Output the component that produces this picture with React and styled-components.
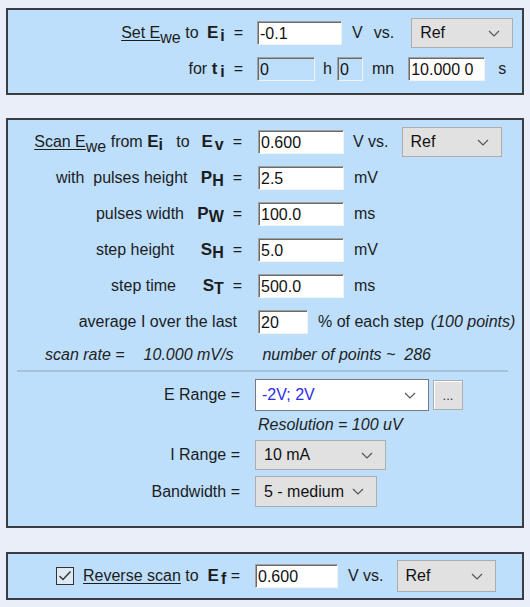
import React from "react";
import styled, { createGlobalStyle } from "styled-components";

const Global = createGlobalStyle`
  html, body { margin: 0; padding: 0; background: #e9eef9; }
  body {
    font-family: "Liberation Sans", Arial, sans-serif;
    font-size: 16px;
    color: #1c1c1c;
  }
`;

const Page = styled.div`
  width: 530px;
  height: 607px;
  box-sizing: border-box;
  padding: 8px 6px 0 6px;
  display: flex;
  flex-direction: column;
`;

const Panel = styled.section`
  box-sizing: border-box;
  height: ${(p) => p.$h}px;
  margin-top: ${(p) => p.$mt || 0}px;
  border: 2px solid #3a3d42;
  background: #bddffc;
  padding-top: ${(p) => p.$pt || 0}px;
  display: flex;
  flex-direction: column;
  gap: ${(p) => p.$gap || 0}px;
`;

const Row = styled.div`
  display: flex;
  align-items: center;
  height: ${(p) => p.$h || 30}px;
  margin-top: ${(p) => p.$mt || 0}px;
  flex: none;
`;

const Label = styled.div`
  flex: none;
  width: ${(p) => p.$w}px;
  margin-right: ${(p) => p.$gap}px;
  text-align: right;
  white-space: pre;
  display: flex;
  justify-content: flex-end;
  align-items: center;
`;

const Sym = styled.span`
  font-weight: bold;
  font-size: 17px;
  margin-left: ${(p) => p.$ml || 0}px;
`;

const Sub = styled.span`
  position: relative;
  top: ${(p) => p.$drop || 5}px;
  font-size: ${(p) => p.$size || 16}px;
  font-weight: ${(p) => (p.$bold ? "bold" : "normal")};
  margin-left: ${(p) => p.$ml || 0}px;
`;

const Under = styled.span`
  text-decoration: underline;
  text-underline-offset: 2px;
`;

const Field = styled.input`
  box-sizing: border-box;
  width: ${(p) => p.$w}px;
  height: 24px;
  margin: 0 0 0 ${(p) => p.$ml || 0}px;
  padding: 1px 0 0 2px;
  font: 16px "Liberation Sans", Arial, sans-serif;
  color: #111;
  background: ${(p) => (p.$off ? "#bddffc" : "#ffffff")};
  border: 1px solid;
  border-color: #a0a0a0 #f2f2f2 #f2f2f2 #a0a0a0;
  box-shadow: inset 1px 1px 0 #6a6a6a;
  outline: none;
  flex: none;
`;

const Unit = styled.span`
  margin-left: ${(p) => p.$ml || 10}px;
  white-space: pre;
  flex: none;
`;

const Note = styled.span`
  font-style: italic;
  color: #222;
  margin-left: ${(p) => p.$ml || 0}px;
  white-space: pre;
  flex: none;
`;

const Combo = styled.div`
  box-sizing: border-box;
  width: ${(p) => p.$w}px;
  height: ${(p) => p.$h || 30}px;
  margin-left: ${(p) => p.$ml || 0}px;
  padding: 0 12px 0 ${(p) => (p.$white ? 6 : 8)}px;
  display: flex;
  align-items: center;
  justify-content: space-between;
  background: ${(p) => (p.$white ? "#ffffff" : "#e1e1e1")};
  border: 1px solid ${(p) => (p.$white ? "#7a7a7a" : "#adadad")};
  color: ${(p) => (p.$white ? "#2b2bee" : "#111")};
  flex: none;
`;

const MoreButton = styled.div`
  box-sizing: border-box;
  width: 30px;
  height: 30px;
  margin-left: 4px;
  display: flex;
  align-items: flex-end;
  justify-content: center;
  padding-bottom: 7px;
  background: #e1e1e1;
  border: 1px solid #adadad;
  box-shadow: inset 1px 1px 0 #ffffff;
  font-size: 13px;
  line-height: 1;
  color: #333;
  flex: none;
`;

const Divider = styled.div`
  height: 2px;
  margin: 0 14px 0 9px;
  background: #a6c2da;
  flex: none;
`;

const IndentRow = styled(Row)`
  padding-left: ${(p) => p.$pl}px;
`;

const Chevron = () => (
  <svg width="12" height="7" viewBox="0 0 12 7">
    <polyline points="1,1 6,6 11,1" fill="none" stroke="#555" strokeWidth="1.2" />
  </svg>
);

const Select = ({ value, ...rest }) => (
  <Combo {...rest}>
    <span>{value}</span>
    <Chevron />
  </Combo>
);

const CheckBox = styled.span`
  display: inline-flex;
  width: 18px;
  height: 18px;
  margin-right: 9px;
`;

const Checked = () => (
  <CheckBox>
    <svg width="18" height="18" viewBox="0 0 18 18">
      <rect x="0.5" y="0.5" width="17" height="17" fill="#dfe9f3" stroke="#333" />
      <polyline points="3.5,9 7,12.5 14.5,4.5" fill="none" stroke="#333" strokeWidth="1.4" />
    </svg>
  </CheckBox>
);

export default function App() {
  return (
    <>
      <Global />
      <Page>
        <Panel $h={87} $pt={8} $gap={6}>
          <Row>
            <Label $w={235} $gap={14}>
              <Under>Set E</Under>
              <Sub>we</Sub>
              <span> to </span>
              <Sym $ml={4}>E</Sym>
              <Sub $bold $drop={3} $ml={2}>i</Sub>
              <span>  =</span>
            </Label>
            <Field $w={85} defaultValue="-0.1" readOnly />
            <Unit $ml={10}>V</Unit>
            <Unit $ml={11}>vs.</Unit>
            <Select value="Ref" $w={102} $ml={17} />
          </Row>
          <Row>
            <Label $w={235} $gap={14}>
              <span>for </span>
              <Sym>t</Sym>
              <Sub $bold $drop={3} $ml={3}>i</Sub>
              <span>  =</span>
            </Label>
            <Field $w={58} $off defaultValue="0" readOnly />
            <Unit $ml={8}>h</Unit>
            <Field $w={26} $ml={5} $off defaultValue="0" readOnly />
            <Unit $ml={9}>mn</Unit>
            <Field $w={77} $ml={14} defaultValue="10.000 0" readOnly />
            <Unit $ml={13}>s</Unit>
          </Row>
        </Panel>

        <Panel $h={410} $mt={23} $pt={4}>
          <Row $h={36}>
            <Label $w={234} $gap={16}>
              <Under>Scan E</Under>
              <Sub>we</Sub>
              <span> from </span>
              <Sym>E</Sym>
              <Sub $bold $drop={3}>i</Sub>
              <span>   to  </span>
              <Sym $ml={3}>E</Sym>
              <Sub $bold $drop={3} $ml={2}>v</Sub>
              <span>  =</span>
            </Label>
            <Field $w={86} defaultValue="0.600" readOnly />
            <Unit $ml={9}>V vs.</Unit>
            <Select value="Ref" $w={100} $ml={13} />
          </Row>
          <Row $h={36}>
            <Label $w={234} $gap={16}>
              <span>with  pulses height   </span>
              <Sym>P</Sym>
              <Sub $bold $drop={3}>H</Sub>
              <span>  =</span>
            </Label>
            <Field $w={86} defaultValue="2.5" readOnly />
            <Unit>mV</Unit>
          </Row>
          <Row $h={36}>
            <Label $w={234} $gap={16}>
              <span>pulses width   </span>
              <Sym>P</Sym>
              <Sub $bold $drop={3}>W</Sub>
              <span>  =</span>
            </Label>
            <Field $w={86} defaultValue="100.0" readOnly />
            <Unit>ms</Unit>
          </Row>
          <Row $h={36}>
            <Label $w={234} $gap={16}>
              <span>step height      </span>
              <Sym>S</Sym>
              <Sub $bold $drop={3}>H</Sub>
              <span>  =</span>
            </Label>
            <Field $w={86} defaultValue="5.0" readOnly />
            <Unit>mV</Unit>
          </Row>
          <Row $h={36}>
            <Label $w={234} $gap={16}>
              <span>step time      </span>
              <Sym>S</Sym>
              <Sub $bold $drop={3}>T</Sub>
              <span>  =</span>
            </Label>
            <Field $w={86} defaultValue="500.0" readOnly />
            <Unit>ms</Unit>
          </Row>
          <Row $h={36}>
            <Label $w={229} $gap={21}>
              <span>average I over the last</span>
            </Label>
            <Field $w={50} defaultValue="20" readOnly />
            <Unit>% of each step</Unit>
            <Note $ml={7}>(100 points)</Note>
          </Row>
          <IndentRow $h={30} $pl={37}>
            <Note>scan rate =</Note>
            <Note $ml={19}>10.000 mV/s</Note>
            <Note $ml={29}>number of points ~  286</Note>
          </IndentRow>
          <Divider />
          <Row $h={32} $mt={7}>
            <Label $w={232} $gap={15}>E Range =</Label>
            <Select value="-2V; 2V" $w={174} $h={32} $white />
            <MoreButton>...</MoreButton>
          </Row>
          <IndentRow $h={28} $pl={250}>
            <Note>Resolution = 100 uV</Note>
          </IndentRow>
          <Row $h={30} $mt={1}>
            <Label $w={232} $gap={15}>I Range =</Label>
            <Select value="10 mA" $w={131} />
          </Row>
          <Row $h={31} $mt={6}>
            <Label $w={232} $gap={15}>Bandwidth =</Label>
            <Select value="5 - medium" $w={122} $h={31} />
          </Row>
        </Panel>

        <Panel $h={48} $mt={24}>
          <Row $h={44}>
            <Label $w={232} $gap={15}>
              <Checked />
              <Under>Reverse scan</Under>
              <span> to  </span>
              <Sym>E</Sym>
              <Sub $bold $drop={3} $ml={2}>f</Sub>
              <span> =</span>
            </Label>
            <Field $w={83} defaultValue="0.600" readOnly />
            <Unit $ml={10}>V vs.</Unit>
            <Select value="Ref" $w={99} $h={32} $ml={13} />
          </Row>
        </Panel>
      </Page>
    </>
  );
}
